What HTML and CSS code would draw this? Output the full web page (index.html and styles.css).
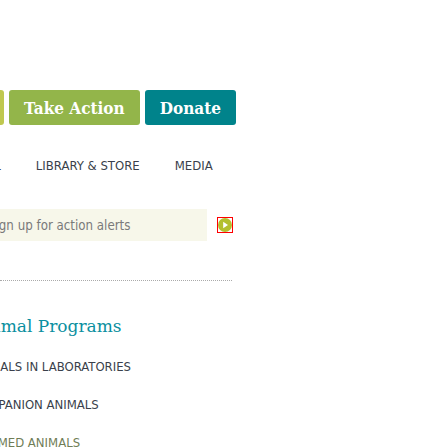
FILE: index.html
```html
<!DOCTYPE html>
<html lang="en">
<head>
<meta charset="utf-8">
<title>Animal Programs</title>
<link rel="stylesheet" href="styles.css">
</head>
<body>
<div class="page">
  <header class="header">
    <div class="actions">
      <a class="btn btn-join" href="#">Join</a>
      <a class="btn btn-action" href="#">Take Action</a>
      <a class="btn btn-donate" href="#">Donate</a>
    </div>
    <nav class="nav">
      <a class="nav-item nav-first" href="#">GLOBAL</a>
      <a class="nav-item" href="#">LIBRARY &amp; STORE</a>
      <a class="nav-item" href="#">MEDIA</a>
    </nav>
  </header>

  <form class="signup">
    <div class="signup-field">Sign up for action alerts</div>
    <button class="signup-go" type="button" aria-label="Submit">
      <svg viewBox="0 0 14 14" width="14" height="14"><circle cx="7" cy="7" r="7" fill="#b3bf2e"/><path d="M5.2 3.8 L10 7 L5.2 10.2 Z" fill="#fff"/></svg>
    </button>
  </form>

  <hr class="rule">

  <section class="programs">
    <h2 class="programs-title">Animal Programs</h2>
    <ul class="programs-list">
      <li class="prog prog-lab"><a href="#">ANIMALS IN LABORATORIES</a></li>
      <li class="prog prog-comp"><a href="#">COMPANION ANIMALS</a></li>
      <li class="prog prog-farm"><a href="#">FARMED ANIMALS</a></li>
    </ul>
  </section>
</div>
</body>
</html>
```

FILE: styles.css
```css
html, body {
  margin: 0;
  padding: 0;
  background: #fff;
}
body {
  width: 448px;
  height: 448px;
  overflow: hidden;
  font-family: "DejaVu Sans Condensed", "DejaVu Sans", sans-serif;
}
.page {
  width: 448px;
}
a { text-decoration: none; }

.header {
  padding-top: 90px;
}
.actions {
  display: flex;
  gap: 5px;
  margin-left: -66px;
}
.btn {
  display: flex;
  align-items: center;
  height: 35px;
  padding: 0 15px;
  border-radius: 3px;
  color: #ffffff;
  font-family: "DejaVu Serif Condensed", "DejaVu Serif", serif;
  font-weight: bold;
  font-size: 17px;
  white-space: nowrap;
  box-sizing: border-box;
}
.btn-join { background: #bfc84f; width: 70px; }
.btn-action { background: #93b54a; }
.btn-donate { background: #00838b; }

.nav {
  display: flex;
  gap: 35px;
  margin-top: 33px;
  margin-left: -46px;
}
.nav-item {
  font-size: 13px;
  color: #3a3f4b;
}

.signup {
  display: flex;
  align-items: center;
  gap: 10px;
  margin-top: 36px;
  margin-left: -40px;
}
.signup-field {
  width: 247px;
  height: 32px;
  box-sizing: border-box;
  background: #f7f7ea;
  padding-left: 28px;
  display: flex;
  align-items: center;
  color: #7a7a7a;
  font-size: 13.2px;
}
.signup-go {
  width: 16px;
  height: 16px;
  padding: 0;
  border: 1px solid #ff0000;
  background: #fff;
  display: flex;
  align-items: center;
  justify-content: center;
}
.signup-go svg { display: block; }

.rule {
  margin: 39px 0 0 0;
  width: 232px;
  border: 0;
  border-top: 1px dotted #aaa;
}

.programs {
  margin-top: 35px;
}
.programs-title {
  margin: 0;
  font-family: "DejaVu Serif", serif;
  font-weight: normal;
  font-size: 17px;
  color: #0a8fa0;
  margin-left: -28px;
}
.programs-list {
  list-style: none;
  margin: 20px 0 0 0;
  padding: 0;
  display: flex;
  flex-direction: column;
  gap: 19px;
}
.prog a {
  font-size: 13px;
  color: #3a3f4b;
}
.prog-lab { margin-left: -30px; }
.prog-comp { margin-left: -29px; }
.prog-farm { margin-left: -24px; }
.prog-farm a { color: #6f7d56; }
```
